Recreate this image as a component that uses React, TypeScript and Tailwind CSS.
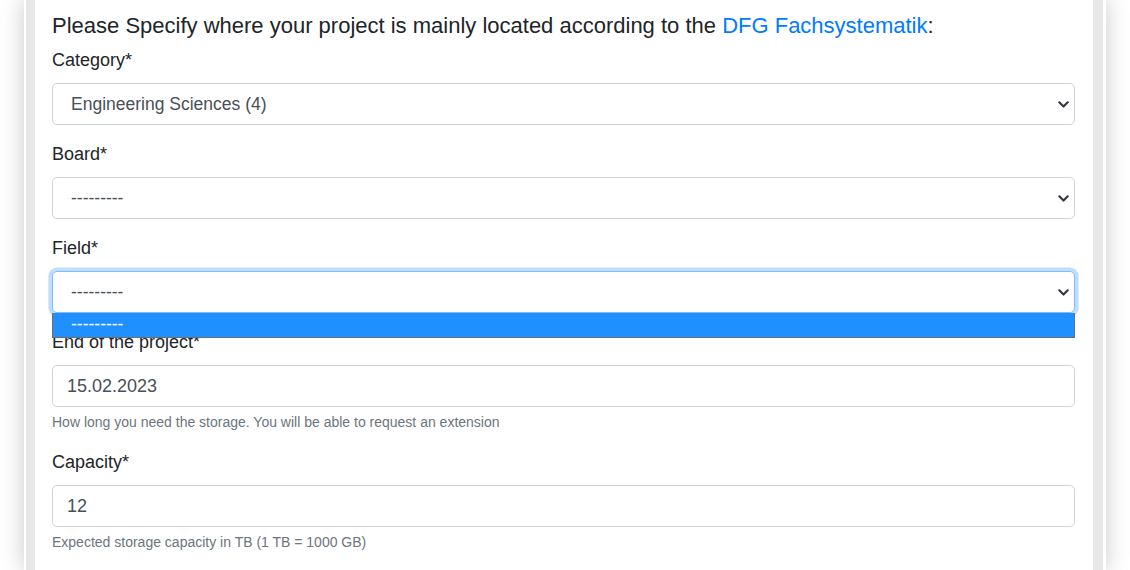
import React from "react";

const Chevron = () => (
  <svg width="11" height="7" viewBox="0 0 11 7" className="shrink-0">
    <polyline points="1.3,1.3 5.5,5.5 9.7,1.3" fill="none" stroke="#343a40" strokeWidth="2.2" strokeLinecap="round" strokeLinejoin="round" />
  </svg>
);

function SelectBox({ value, focused }: { value: string; focused?: boolean }) {
  return (
    <div
      className={
        "h-[42px] w-full rounded-[5px] border bg-white flex items-center pl-[18px] pr-[5px] text-[17.5px] text-[#495057] " +
        (focused
          ? "border-[#80bdff] shadow-[0_0_0_3.6px_rgba(0,123,255,0.25)]"
          : "border-[#ced4da]")
      }
    >
      <span className="flex-1 leading-none pt-[2px]">{value}</span>
      <Chevron />
    </div>
  );
}

function InputBox({ value }: { value: string }) {
  return (
    <div className="h-[42px] w-full rounded-[5px] border border-[#ced4da] bg-white flex items-center pl-[14px] text-[18px] text-[#495057]">
      {value}
    </div>
  );
}

function Label({ children }: { children: React.ReactNode }) {
  return <div className="text-[18px] leading-[27px] text-[#212529] mb-[9px]">{children}</div>;
}

function Help({ children }: { children: React.ReactNode }) {
  return <div className="mt-[5px] text-[14px] leading-[21px] text-[#6c757d]">{children}</div>;
}

export default function App() {
  return (
    <div
      className="h-[570px] w-[1130px] overflow-hidden bg-white"
      style={{ fontFamily: '"Liberation Sans", Arial, sans-serif' }}
    >
      <div className="mx-[24px] h-[570px] border-l-2 border-r-[3px] border-white bg-[#e8e8e8] pl-[9px] pr-[10px] shadow-[0_0_22px_rgba(0,0,0,0.22)]">
        <div className="h-full bg-white pl-[17px] pr-[18px] pt-[13px]">
          <div className="text-[22px] leading-[26px] text-[#212529] mb-[8px] whitespace-nowrap">
            Please Specify where your project is mainly located according to the{" "}
            <span className="text-[#007bff]">DFG Fachsystematik</span>:
          </div>

          <div className="mb-[16px]">
            <Label>Category*</Label>
            <SelectBox value="Engineering Sciences (4)" />
          </div>

          <div className="mb-[16px]">
            <Label>Board*</Label>
            <SelectBox value="---------" />
          </div>

          <div className="mb-[16px] relative z-10">
            <Label>Field*</Label>
            <div className="relative">
              <SelectBox value="---------" focused />
              <div className="absolute left-0 right-0 top-[42px] h-[25px] bg-[#1e90ff] border-x border-b border-[#6e6e6e] flex items-center pl-[18px] text-[17.5px] leading-none text-white">
                ---------
              </div>
            </div>
          </div>

          <div className="mb-[16px]">
            <Label>End of the project*</Label>
            <InputBox value="15.02.2023" />
            <Help>How long you need the storage. You will be able to request an extension</Help>
          </div>

          <div className="mb-[16px]">
            <Label>Capacity*</Label>
            <InputBox value="12" />
            <Help>Expected storage capacity in TB (1 TB = 1000 GB)</Help>
          </div>
        </div>
      </div>
    </div>
  );
}
